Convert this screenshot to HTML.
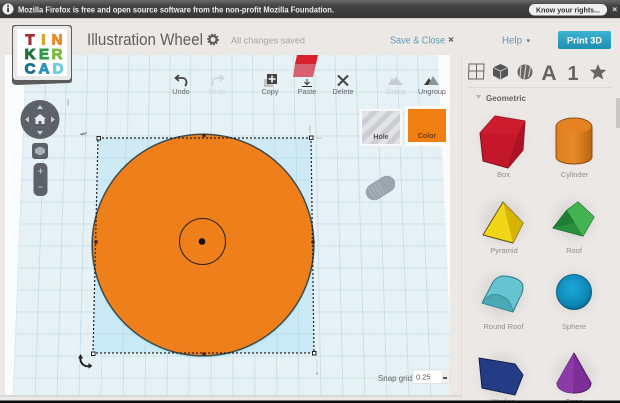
<!DOCTYPE html>
<html><head><meta charset="utf-8"><style>
html,body{margin:0;padding:0;background:#ece8e6}
body{width:620px;height:403px;overflow:hidden;position:relative;font-family:"Liberation Sans",sans-serif}
svg{position:absolute;left:0;top:0}
text{font-family:"Liberation Sans",sans-serif}
</style></head><body>
<svg width="620" height="403" viewBox="0 0 620 403" xmlns="http://www.w3.org/2000/svg">
<defs>
<linearGradient id="bar" x1="0" y1="0" x2="0" y2="1"><stop offset="0" stop-color="#6a6a6a"/><stop offset=".3" stop-color="#444"/><stop offset="1" stop-color="#353535"/></linearGradient>
<linearGradient id="print" x1="0" y1="0" x2="0" y2="1"><stop offset="0" stop-color="#3fb3d0"/><stop offset="1" stop-color="#1d8fb3"/></linearGradient>
<linearGradient id="cyl" x1="0" y1="0" x2="1" y2="0"><stop offset="0" stop-color="#e07d1a"/><stop offset=".5" stop-color="#e58a2c"/><stop offset="1" stop-color="#b9640f"/></linearGradient>
<radialGradient id="sph" cx=".45" cy=".4" r=".6"><stop offset="0" stop-color="#1fa8d8"/><stop offset=".8" stop-color="#0c86b6"/><stop offset="1" stop-color="#0a6a92"/></radialGradient>
<linearGradient id="sel" x1="0" y1="0" x2="0" y2="1"><stop offset="0" stop-color="#cfeaf5"/><stop offset="1" stop-color="#c8e9f6"/></linearGradient>
<pattern id="g1" width="5.500" height="5.500" patternUnits="userSpaceOnUse"><path d="M5.500 0V5.500M0 5.500H5.500" stroke="#d9e9ee" stroke-width=".4" fill="none"/></pattern>
<pattern id="hatch" width="11" height="11" patternUnits="userSpaceOnUse" patternTransform="rotate(45)"><rect width="11" height="11" fill="#e2e3e7"/><rect width="5.500" height="11" fill="#cdced4"/></pattern>
<filter id="sh" x="-30%" y="-30%" width="160%" height="160%"><feGaussianBlur stdDeviation="5"/></filter>
<clipPath id="plane"><polygon points="26,55 438,55 453,396 13,396"/></clipPath>
</defs>

<!-- app background -->
<rect width="620" height="403" fill="#ece8e6"/>

<!-- notification bar -->
<rect width="620" height="18" fill="url(#bar)"/>
<rect y="18" width="620" height="1" fill="#cfcfcf"/>
<circle cx="8" cy="9" r="5.500" fill="#eee"/><rect x="7.200" y="7.500" width="1.700" height="4.600" fill="#333"/><rect x="7.200" y="5" width="1.700" height="1.600" fill="#333"/>
<text x="18" y="12.600" font-size="7.800" font-weight="bold" fill="#eee" textLength="316" lengthAdjust="spacingAndGlyphs">Mozilla Firefox is free and open source software from the non-profit Mozilla Foundation.</text>
<rect x="529" y="4" width="78" height="11.500" rx="5.500" fill="#efefef"/>
<text x="568" y="12.500" font-size="7.600" font-weight="bold" fill="#333" text-anchor="middle" textLength="64" lengthAdjust="spacingAndGlyphs">Know your rights...</text>
<path d="M613 7.500l3.500 3.500M616.500 7.500l-3.500 3.500" stroke="#ddd" stroke-width="1"/>

<!-- workplane -->
<rect x="5" y="55" width="445" height="341" fill="#f9fbfc"/>
<polygon points="26,55 438,55 453,396 13,396" fill="#e6f2f6"/>
<g clip-path="url(#plane)">
<rect x="0" y="55" width="460" height="345" fill="url(#g1)"/>
<path d="M13 396L26 55M35 396L46.600 55M57 396L67.200 55M79 396L87.800 55M101 396L108.400 55M123 396L129 55M145 396L149.600 55M167 396L170.200 55M189 396L190.800 55M211 396L211.400 55M233 396L232 55M255 396L252.600 55M277 396L273.200 55M299 396L293.800 55M321 396L314.400 55M343 396L335 55M365 396L355.600 55M387 396L376.200 55M409 396L396.800 55M431 396L417.400 55" stroke="#c4dce5" stroke-width=".8" fill="none"/>
<path d="M0 70H460M0 92H460M0 114H460M0 136H460M0 158H460M0 180H460M0 202H460M0 224H460M0 246H460M0 268H460M0 290H460M0 312H460M0 334H460M0 356H460M0 378H460" stroke="#c4dce5" stroke-width=".8" fill="none"/>
</g>
<rect x="450" y="55" width="12" height="341" fill="#ece8e6"/>
<rect y="395" width="462" height="2" fill="#d8d8d6"/>

<!-- logo -->
<path d="M15 25h54q3 0 3 3v52q0 3-3 3l-52 2q-5 0-5-4V28q0-3 3-3z" fill="#5b5b5b"/>
<rect x="13" y="26" width="58" height="54" rx="3" fill="#e9e9e9"/>
<rect x="17" y="29" width="50" height="47" rx="1" fill="#fff"/>
<g font-size="15" font-weight="bold" text-anchor="middle" stroke-width="1">
<text x="30" y="44.500" fill="#a82a35" stroke="#a82a35">T</text>
<text x="43.500" y="44.500" fill="#dca030" stroke="#dca030">I</text>
<text x="57" y="44.500" fill="#e8892b" stroke="#e8892b">N</text>
<text x="30" y="59" fill="#256f3a" stroke="#256f3a">K</text>
<text x="44" y="59" fill="#2e9a45" stroke="#2e9a45">E</text>
<text x="57" y="59" fill="#7db840" stroke="#7db840">R</text>
<text x="30" y="73.500" fill="#1d6d8f" stroke="#1d6d8f">C</text>
<text x="44" y="73.500" fill="#2e93b8" stroke="#2e93b8">A</text>
<text x="58" y="73.500" fill="#6fcbe0" stroke="#6fcbe0">D</text>
</g>

<!-- header -->
<text x="87" y="45" font-size="16.200" fill="#5f5f5f" textLength="116" lengthAdjust="spacingAndGlyphs">Illustration Wheel</text>
<circle cx="213" cy="39.500" r="3.600" fill="none" stroke="#5c5c5c" stroke-width="2.200"/>
<circle cx="213" cy="39.500" r="5.200" fill="none" stroke="#5c5c5c" stroke-width="1.400" stroke-dasharray="1.600 1.600"/>
<text x="231" y="43.500" font-size="9.300" fill="#a5a5a5" textLength="74" lengthAdjust="spacingAndGlyphs">All changes saved</text>
<text x="390" y="43.500" font-size="10" fill="#5b9db5" textLength="55" lengthAdjust="spacingAndGlyphs">Save &amp; Close</text>
<path d="M449 37.500l4 4M453 37.500l-4 4" stroke="#666" stroke-width="1.300"/>
<text x="502" y="43.500" font-size="10.500" fill="#5b9db5" textLength="20" lengthAdjust="spacingAndGlyphs">Help</text>
<path d="M526.500 39.500h3.500l-1.750 3z" fill="#666"/>
<rect x="558" y="31" width="53" height="18" rx="2" fill="url(#print)"/>
<text x="584.500" y="43.500" font-size="9.500" font-weight="bold" fill="#fff" text-anchor="middle" textLength="35" lengthAdjust="spacingAndGlyphs">Print 3D</text>

<!-- toolbar -->
<g font-size="7.300" fill="#666" text-anchor="middle">
<text x="181" y="94">Undo</text>
<text x="217.500" y="94" fill="#cfd4d6">Redo</text>
<text x="270" y="94">Copy</text>
<text x="307" y="94">Paste</text>
<text x="343" y="94">Delete</text>
<text x="396" y="94" fill="#c8cdd0">Group</text>
<text x="432" y="94">Ungroup</text>
</g>
<path d="M176 78h6c3 0 4.500 2 4.500 4.500 0 1.500-.5 2.500-1.500 3.500M179 75l-3.500 3 3.500 3" fill="none" stroke="#444" stroke-width="1.800"/>
<path d="M223 78h-6c-3 0-4.500 2-4.500 4.500 0 1.500.5 2.500 1.500 3.500M220 75l3.500 3-3.500 3" fill="none" stroke="#d0d5d8" stroke-width="1.800"/>
<rect x="264" y="79" width="9" height="8" fill="#c0c4c6"/>
<rect x="267" y="74" width="10" height="10" fill="#444"/>
<path d="M272 75.500v7M268.500 79h7" stroke="#fff" stroke-width="1.500"/>
<path d="M297 55h21l-2 9h-21z" fill="#d8202f"/>
<path d="M295 64h21l-3 13h-20z" fill="#d86070"/>
<path d="M307 79v5M304.500 82l2.500 2.500 2.500-2.500M302 86.500h10" stroke="#333" stroke-width="1" fill="none"/>
<path d="M338 75.500l10 10M348 75.500l-10 10" stroke="#444" stroke-width="2"/>
<path d="M388 85l4-7 2 1.500 2-3 3 4 4 4.500z" fill="#c8cdd0"/>
<path d="M424 85l5-7 4 7z" fill="#3d3d3d"/><path d="M428 85l5-9 6 9z" fill="#8b9298"/>

<!-- hole / color -->
<rect x="360" y="109" width="42" height="37" fill="#f6f8fa"/>
<rect x="362" y="111" width="38" height="33" fill="url(#hatch)"/>
<text x="381" y="139" font-size="7" font-weight="bold" fill="#555" text-anchor="middle">Hole</text>
<rect x="405" y="106" width="45" height="40" rx="2" fill="#fbfaf6"/>
<rect x="408" y="109" width="38" height="33" fill="#f07f13"/>
<text x="427" y="138" font-size="7" font-weight="bold" fill="#7a3a08" text-anchor="middle">Color</text>

<!-- small pill -->
<g transform="rotate(-32 380.500 188)">
<rect x="365" y="180" width="31" height="16" rx="8" fill="#9aa6ad" stroke="#88949b" stroke-width=".5"/>
<path d="M370 181v14M373.500 181v14M377 181v14M380.500 181v14" stroke="#aeb8be" stroke-width=".9"/>
</g>

<!-- navigation -->
<circle cx="40" cy="119.500" r="19.500" fill="#5c6268"/>
<path d="M40 105l3 4h-6zM40 135l3-4h-6zM25 119.500l4-3v6zM55 119.500l-4-3v6z" fill="#c9ced2"/>
<path d="M40 114l6 5h-1.500v5h-3v-3h-3v3h-3v-5H34z" fill="#e8eaec"/>
<rect x="32" y="143" width="16" height="16" rx="3" fill="#5c6268"/>
<path d="M40 146.500l5 2.500v4l-5 2.500-5-2.500v-4z" fill="#aab0b5"/>
<rect x="33.500" y="163" width="14" height="33" rx="5" fill="#5c6268"/>
<path d="M38 171h5M40.500 168.500v5M38.500 187h4" stroke="#b8bdc1" stroke-width="1"/>
<text x="67" y="104" font-size="6" fill="#778">}</text>
<path d="M80 134h5l-2-1.500M80 134l3 1M85 133h2" stroke="#666" stroke-width=".7" fill="none"/>

<!-- selection -->
<polygon points="98,138 311,138 314,353 93,353" fill="url(#sel)"/>
<polygon points="98,138 311,138 314,353 93,353" fill="url(#g1)" opacity=".6"/>
<path d="M123 353L126 138M145 353L148 138M277 353L275 138M299 353L296 138M94 158H312M94 180H312M94 334H314" stroke="#b6dae7" stroke-width=".7" fill="none"/>
<circle cx="203" cy="246" r="112" fill="#b2e4f5"/>
<circle cx="203" cy="245" r="110.800" fill="#ef7f1a" stroke="#3f4a4c" stroke-width="1.500"/>
<polygon points="98,138 311,138 314,353 93,353" fill="none" stroke="#222" stroke-width="1.200" stroke-dasharray="2 2"/>
<g fill="#fff" stroke="#222" stroke-width="1"><rect x="91.500" y="352" width="3.500" height="3.500"/><rect x="312.500" y="351.500" width="3.500" height="3.500"/><rect x="97" y="136.500" width="3.500" height="3.500"/><rect x="309.500" y="136" width="3.500" height="3.500"/></g>
<g fill="#3a1a14"><circle cx="204" cy="135.500" r="1.700"/><circle cx="204" cy="354" r="1.700"/><circle cx="96" cy="242" r="1.700"/><circle cx="313" cy="242" r="1.700"/></g>
<circle cx="202.500" cy="241.500" r="23" fill="none" stroke="#222" stroke-width="1"/>
<circle cx="202" cy="241.500" r="3.300" fill="#111"/>
<path d="M80.500 357c-.5 4 1 7 4 8.500 2 1 4.500 1 6.500.5" fill="none" stroke="#222" stroke-width="1.900"/>
<path d="M80.500 354l-2.500 4.500h5zM92.500 366l-4-3v5.500z" fill="#222"/>
<path d="M317 360v11" stroke="#b7c2c6" stroke-width=".7" stroke-dasharray="2 1"/>
<text x="317" y="375" font-size="5" fill="#778" text-anchor="middle">v</text>
<path d="M310 125v8M316 138h6" stroke="#8a959a" stroke-width=".6"/>

<!-- snap grid -->
<text x="378" y="381" font-size="8.500" fill="#666" textLength="34" lengthAdjust="spacingAndGlyphs">Snap grid</text>
<rect x="413" y="370" width="37" height="13.500" fill="#fff" stroke="#cfd4d6" stroke-width=".6"/>
<text x="416" y="379.500" font-size="7.500" fill="#555">0.25</text>
<rect x="441" y="371" width="8.500" height="12" fill="#eee"/>
<path d="M443 378h4" stroke="#222" stroke-width="1.500"/>

<!-- right panel -->
<rect x="461" y="55" width="1" height="341" fill="#dfdcda"/>
<g fill="none" stroke="#666" stroke-width="1">
<path d="M469 64h15l-.5 15h-15zM476.500 64v15M468.500 71h15"/>
</g>
<path d="M500.500 64l7.500 3.500v8l-7.500 4-7.500-4v-8z" fill="#555"/><path d="M493 67.500l7.500 3.500 7.500-3.500M500.500 71v8" stroke="#d8d5d3" stroke-width=".8" fill="none"/>
<circle cx="525" cy="72" r="7.500" fill="#666"/><path d="M521 66l-1 12M526 65l-2 14M530.500 67l-2 10" stroke="#cfcfcf" stroke-width="1.200"/>
<text x="549" y="80" font-size="21" font-weight="bold" fill="#666" text-anchor="middle">A</text>
<text x="573" y="80" font-size="20" font-weight="bold" fill="#666" text-anchor="middle">1</text>
<path d="M598 64l2.300 5.500 6 .4-4.600 3.800 1.500 5.800-5.200-3.200-5.200 3.200 1.500-5.800-4.600-3.800 6-.4z" fill="#666"/>
<rect x="468" y="87" width="144" height="1" fill="#dcdad8"/>
<path d="M476 95h5l-2.500 4z" fill="#b5b5b5"/>
<text x="486" y="101" font-size="8.300" font-weight="bold" fill="#666" textLength="40" lengthAdjust="spacingAndGlyphs">Geometric</text>
<rect x="616" y="98" width="4" height="30" fill="#c8c8c8"/>

<!-- shape shadows -->
<g filter="url(#sh)" fill="#d4d0ce" opacity=".7">
<circle cx="502" cy="140" r="22"/><circle cx="574" cy="140" r="18"/><circle cx="503" cy="222" r="22"/><circle cx="574" cy="220" r="20"/><circle cx="502" cy="295" r="22"/><circle cx="574" cy="292" r="20"/><circle cx="502" cy="376" r="22"/><circle cx="574" cy="375" r="20"/>
</g>

<g stroke-linejoin="round">
<!-- box -->
<path d="M495 116l30 5-2 29-15 18-25-7-3-28z" fill="#c5172a" stroke="#7a1420" stroke-width="1"/>
<path d="M495 116l30 5-8 14-37-2z" fill="#cc1c2d"/>
<path d="M517 135l8-14-2 29-15 18z" fill="#ad1327"/>
<!-- cylinder -->
<path d="M556 127c0-5 8-9 18-9s18 4 18 9v30c0 4-8 7-18 7s-18-3-18-7z" fill="url(#cyl)" stroke="#8a4f10" stroke-width="1"/>
<ellipse cx="574" cy="126" rx="17" ry="7.500" fill="#e48321"/>
<!-- pyramid -->
<path d="M503 202l-20 33 30 8 10-20z" fill="#f0d617" stroke="#5d5210" stroke-width="1"/>
<path d="M503 202l20 21-10 20z" fill="#d5b405"/>
<!-- roof -->
<path d="M553 228l14-18 11-8 16 15-11 19z" fill="#3aa64a" stroke="#145d25" stroke-width="1"/>
<path d="M553 228l14-18 8 13z" fill="#1f7f34"/>
<path d="M553 228l22-5 8 13z" fill="#2a9040"/>
<path d="M567 210l11-8 16 15-11 19-8-13z" fill="#43b352"/>
<!-- round roof -->
<path d="M482 303l11-21c3-4 6-6 10-6 10 0 20 4 20 11 0 4-1 7-3 10l-7 15z" fill="#65c4cf" stroke="#2d7d87" stroke-width="1"/>
<path d="M482 303c5-7 11-10 17-8 8 2 13 9 14 17z" fill="#49a9b6" stroke="#338a96" stroke-width=".7"/>
<!-- sphere -->
<circle cx="574" cy="292" r="17.500" fill="url(#sph)" stroke="#0a5f80" stroke-width="1"/>
<!-- wedge -->
<path d="M479 358l36 6 8 11-8 20-33-7z" fill="#243c85" stroke="#131f4d" stroke-width="1"/>
<!-- cone -->
<path d="M574 353l-17 30c0 6 7 10 17 10s17-4 17-10z" fill="#7d2e98" stroke="#4c1a60" stroke-width="1"/>
<path d="M574 353l-17 30c0 6 7 10 16 10z" fill="#8b3aa8"/>
</g>
<g font-size="7.500" fill="#8f8f8f" text-anchor="middle">
<text x="503.500" y="177">Box</text>
<text x="574.500" y="177">Cylinder</text>
<text x="504" y="253">Pyramid</text>
<text x="574" y="253">Roof</text>
<text x="503.500" y="329">Round Roof</text>
<text x="574" y="329">Sphere</text>
<text x="503" y="404">Wedge</text>
<text x="574" y="404">Cone</text>
</g>

<!-- bottom black strip -->
<rect y="400.500" width="620" height="3" fill="#0c0c0c"/>
</svg>
</body></html>
